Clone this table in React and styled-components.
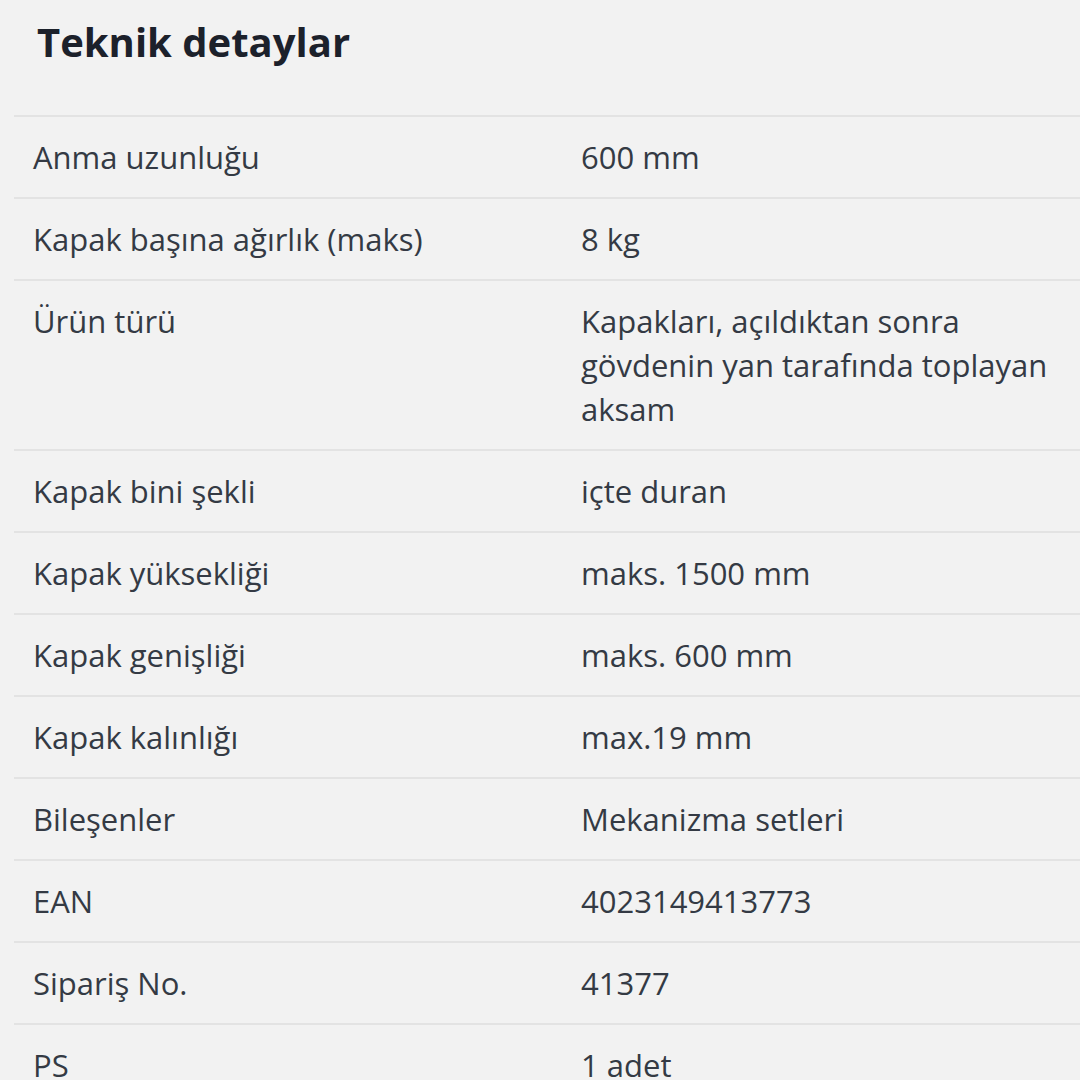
import React from 'react';
import styled, { createGlobalStyle } from 'styled-components';

const GlobalStyle = createGlobalStyle`
  html, body {
    margin: 0;
    padding: 0;
    background: #f2f2f2;
  }
  body {
    font-family: "Open Sans", "Noto Sans", sans-serif;
    overflow: hidden;
  }
`;

const rows = [
  ['Anma uzunluğu', '600 mm'],
  ['Kapak başına ağırlık (maks)', '8 kg'],
  ['Ürün türü', 'Kapakları, açıldıktan sonra gövdenin yan tarafında toplayan aksam'],
  ['Kapak bini şekli', 'içte duran'],
  ['Kapak yüksekliği', 'maks. 1500 mm'],
  ['Kapak genişliği', 'maks. 600 mm'],
  ['Kapak kalınlığı', 'max.19 mm'],
  ['Bileşenler', 'Mekanizma setleri'],
  ['EAN', '4023149413773'],
  ['Sipariş No.', '41377'],
  ['PS', '1 adet'],
];

const Page = styled.div`
  width: 1080px;
  height: 1080px;
  overflow: hidden;
  background: #f2f2f2;
`;

const Title = styled.h2`
  margin: 0;
  padding: 18px 0 0 37px;
  height: 115px;
  box-sizing: border-box;
  font-size: 40px;
  line-height: 48px;
  font-weight: 700;
  color: #1c212b;
`;

const Table = styled.div`
  margin-left: 14px;
  width: 1066px;
  border-top: 2px solid #e3e3e3;
`;

const Row = styled.div`
  display: grid;
  grid-template-columns: 567px 1fr;
  border-bottom: 2px solid #e3e3e3;
`;

const Cell = styled.div`
  padding: 18px 18px 18px ${p => (p.$value ? '0' : '19px')};
  font-size: 31px;
  line-height: 44px;
  color: #343a44;
`;

export default function App() {
  return (
    <Page>
      <GlobalStyle />
      <Title>Teknik detaylar</Title>
      <Table>
        {rows.map(([label, value]) => (
          <Row key={label}>
            <Cell>{label}</Cell>
            <Cell $value>{value}</Cell>
          </Row>
        ))}
      </Table>
    </Page>
  );
}
